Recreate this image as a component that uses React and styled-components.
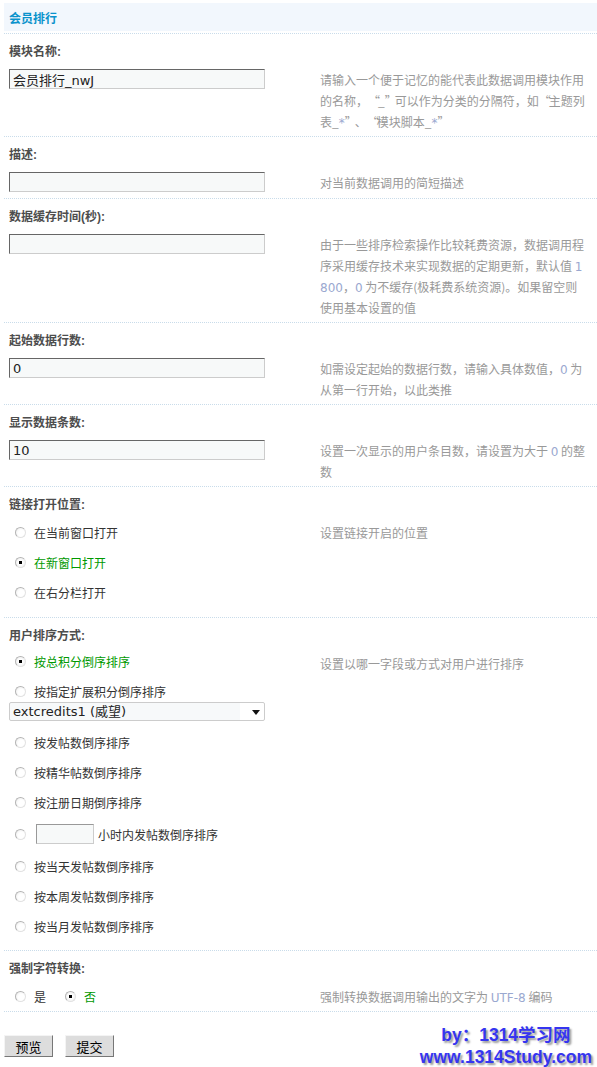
import React from "react";
import styled, { createGlobalStyle } from "styled-components";

const GlobalStyle = createGlobalStyle`
  html, body {
    margin: 0;
    padding: 0;
    background: #ffffff;
  }
  body {
    font: 12px "Liberation Sans", "Noto Sans CJK SC", sans-serif;
    color: #333;
  }
`;

const linkTargets = [
  { text: "在当前窗口打开", checked: false },
  { text: "在新窗口打开", checked: true },
  { text: "在右分栏打开", checked: false },
];

// full-width style quotes, like the SimSun ones in the original page
const Quoted = ({ children }) => (
  <>
    <Quote $open>“</Quote>
    {children}
    <Quote>”</Quote>
  </>
);

function App() {
  return (
    <>
      <GlobalStyle />
      <Page>
        <Header>
          <Title>会员排行</Title>
        </Header>

        <Section>
          <Label>模块名称:</Label>
          <Row>
            <Field>
              <TextInput defaultValue="会员排行_nwJ" />
            </Field>
            <Tip>
              请输入一个便于记忆的能代表此数据调用模块作用的名称，<Quoted>_</Quoted>可以作为分类的分隔符，如<Quoted>主题列表_<Hl>*</Hl></Quoted>、<Quoted>模块脚本_<Hl>*</Hl></Quoted>
            </Tip>
          </Row>
        </Section>

        <Section>
          <Label>描述:</Label>
          <Row>
            <Field>
              <TextInput defaultValue="" />
            </Field>
            <Tip>对当前数据调用的简短描述</Tip>
          </Row>
        </Section>

        <Section>
          <Label>数据缓存时间(秒):</Label>
          <Row>
            <Field>
              <TextInput defaultValue="" />
            </Field>
            <Tip>
              由于一些排序检索操作比较耗费资源，数据调用程序采用缓存技术来实现数据的定期更新，默认值 <Hl>1800</Hl>，<Hl>0</Hl> 为不缓存(极耗费系统资源)。如果留空则使用基本设置的值
            </Tip>
          </Row>
        </Section>

        <Section>
          <Label>起始数据行数:</Label>
          <Row>
            <Field>
              <TextInput defaultValue="0" />
            </Field>
            <Tip>
              如需设定起始的数据行数，请输入具体数值，<Hl>0</Hl> 为从第一行开始，以此类推
            </Tip>
          </Row>
        </Section>

        <Section>
          <Label>显示数据条数:</Label>
          <Row>
            <Field>
              <TextInput defaultValue="10" />
            </Field>
            <Tip>
              设置一次显示的用户条目数，请设置为大于 <Hl>0</Hl> 的整数
            </Tip>
          </Row>
        </Section>

        <Section>
          <Label>链接打开位置:</Label>
          <Row>
            <OptionList $top={3} $bottom={10}>
              {linkTargets.map((o) => (
                <Option key={o.text} $checked={o.checked}>
                  <Radio type="radio" name="target" defaultChecked={o.checked} />
                  {o.text}
                </Option>
              ))}
            </OptionList>
            <Tip>设置链接开启的位置</Tip>
          </Row>
        </Section>

        <Section>
          <Label>用户排序方式:</Label>
          <Row>
            <OptionList $top={1} $bottom={9}>
              <Option $checked>
                <Radio type="radio" name="order" defaultChecked />
                按总积分倒序排序
              </Option>
              <Option>
                <Radio type="radio" name="order" />
                按指定扩展积分倒序排序
              </Option>
              <SelectBox>
                <Select defaultValue="1">
                  <option value="1">extcredits1 (威望)</option>
                  <option value="2">extcredits2 (金钱)</option>
                </Select>
              </SelectBox>
              <Option>
                <Radio type="radio" name="order" />
                按发帖数倒序排序
              </Option>
              <Option>
                <Radio type="radio" name="order" />
                按精华帖数倒序排序
              </Option>
              <Option>
                <Radio type="radio" name="order" />
                按注册日期倒序排序
              </Option>
              <Option $tall>
                <Radio type="radio" name="order" />
                <HourInput defaultValue="" />
                小时内发帖数倒序排序
              </Option>
              <Option>
                <Radio type="radio" name="order" />
                按当天发帖数倒序排序
              </Option>
              <Option>
                <Radio type="radio" name="order" />
                按本周发帖数倒序排序
              </Option>
              <Option>
                <Radio type="radio" name="order" />
                按当月发帖数倒序排序
              </Option>
            </OptionList>
            <Tip>设置以哪一字段或方式对用户进行排序</Tip>
          </Row>
        </Section>

        <Section $last>
          <Label>强制字符转换:</Label>
          <Row>
            <OptionList $top={3} $bottom={0} $inline>
              <Option>
                <Radio type="radio" name="charset" />
                是
              </Option>
              <Option $checked>
                <Radio type="radio" name="charset" defaultChecked />
                否
              </Option>
            </OptionList>
            <Tip>
              强制转换数据调用输出的文字为 <Hl>UTF-8</Hl> 编码
            </Tip>
          </Row>
        </Section>

        <Footer>
          <Buttons>
            <Button type="button">预览</Button>
            <Button type="button">提交</Button>
          </Buttons>
          <Watermark>
            <div>by：1314学习网</div>
            <div>www.1314Study.com</div>
          </Watermark>
        </Footer>
      </Page>
    </>
  );
}

const Page = styled.div`
  margin: 3px 0 0 4px;
`;

const Header = styled.div`
  height: 28px;
  margin-bottom: 2px;
  padding-left: 5px;
  display: flex;
  align-items: center;
  background-color: #f2f7fd;
`;

const Title = styled.h3`
  margin: 0;
  font-size: 12px;
  font-weight: bold;
  color: #0b93cc;
`;

const Section = styled.section`
  border-top: 1px dotted #c9dcea;
  border-bottom: ${(p) => (p.$last ? "1px dotted #c9dcea" : "none")};
`;

const Label = styled.div`
  padding: 9px 5px 0;
  height: 18px;
  line-height: 18px;
  font-weight: bold;
  color: #4d4d4d;
`;

const Row = styled.div`
  display: grid;
  grid-template-columns: 311px 267px;
  padding-left: 5px;
  align-items: start;
`;

const Field = styled.div`
  padding: 8px 0 6px;
`;

const TextInput = styled.input`
  box-sizing: border-box;
  display: block;
  width: 256px;
  height: 20px;
  margin: 0;
  padding: 0 3px;
  border: 1px solid #cccccc;
  border-top-color: #666666;
  border-left-color: #666666;
  background: #f7f9f9;
  font: 13px "DejaVu Sans", "Noto Sans CJK SC", sans-serif;
  color: #222;
  outline: none;
`;

const Tip = styled.div`
  padding: 8px 0 4px;
  line-height: 21px;
  font-family: "Noto Sans CJK SC", "Liberation Sans", sans-serif;
  color: #999999;
  word-break: break-all;
`;

const Quote = styled.span`
  display: inline-block;
  width: 10px;
  line-height: 0;
  text-align: ${(p) => (p.$open ? "right" : "left")};
`;

const Hl = styled.span`
  font-family: "DejaVu Sans", sans-serif;
  line-height: 0;
  color: #9aa8d0;
`;

const OptionList = styled.div`
  padding-top: ${(p) => p.$top}px;
  padding-bottom: ${(p) => p.$bottom}px;
  display: flex;
  flex-direction: ${(p) => (p.$inline ? "row" : "column")};
  gap: ${(p) => (p.$inline ? "13px" : "0")};
`;

const Option = styled.label`
  display: flex;
  align-items: center;
  height: ${(p) => (p.$tall ? 34 : 30)}px;
  color: ${(p) => (p.$checked ? "#009900" : "#333333")};
  white-space: nowrap;
`;

const Radio = styled.input`
  appearance: none;
  -webkit-appearance: none;
  box-sizing: border-box;
  width: 11px;
  height: 11px;
  margin: 0 8px 0 6px;
  border-radius: 50%;
  border: 1px solid #b4b4b4;
  border-bottom-color: #e2e2e2;
  border-right-color: #e2e2e2;
  background: radial-gradient(circle at 60% 60%, #ffffff 40%, #eaeaea 100%);
  flex: none;

  &:checked {
    background: radial-gradient(circle, #000000 0 1.6px, #ffffff 2px, #eaeaea 100%);
  }
`;

const SelectBox = styled.div`
  position: relative;
  width: 256px;
  height: 19px;
  margin: -4px 0 6px;

  &::after {
    content: "";
    position: absolute;
    right: 5px;
    top: 8px;
    border-left: 4px solid transparent;
    border-right: 4px solid transparent;
    border-top: 5px solid #111;
    pointer-events: none;
  }
`;

const Select = styled.select`
  appearance: none;
  -webkit-appearance: none;
  box-sizing: border-box;
  width: 100%;
  height: 100%;
  margin: 0;
  padding: 0 0 0 3px;
  border: 1px solid #cccccc;
  border-radius: 2px;
  background: linear-gradient(to right, #f7f9fa 0, #f7f9fa 230px, #ffffff 230px);
  font: 13px "DejaVu Sans", "Noto Sans CJK SC", sans-serif;
  color: #222;
  outline: none;
`;

const HourInput = styled.input`
  box-sizing: border-box;
  width: 58px;
  height: 20px;
  margin: 0 4px 0 2px;
  border: 1px solid #cccccc;
  border-top-color: #999999;
  border-left-color: #999999;
  background: #f7f9f9;
  outline: none;
`;

const Footer = styled.div`
  margin-top: 12px;
  display: flex;
  justify-content: space-between;
  align-items: flex-start;
`;

const Buttons = styled.div`
  margin-top: 11px;
  display: flex;
  gap: 12px;
`;

const Button = styled.button`
  box-sizing: border-box;
  width: 49px;
  height: 22px;
  padding: 0;
  border: 1px solid #777777;
  border-top-color: #f4f4f4;
  border-left-color: #f4f4f4;
  background: #dddddd;
  font: 13px "Noto Sans CJK SC", sans-serif;
  color: #000;
`;

const Watermark = styled.div`
  margin-right: 5px;
  text-align: center;
  font: bold 17.5px/22px "Liberation Sans", "Noto Sans CJK SC", sans-serif;
  color: #3535f0;
  text-shadow: 2px 2px 2px #9a9a9a;
`;

export default App;
